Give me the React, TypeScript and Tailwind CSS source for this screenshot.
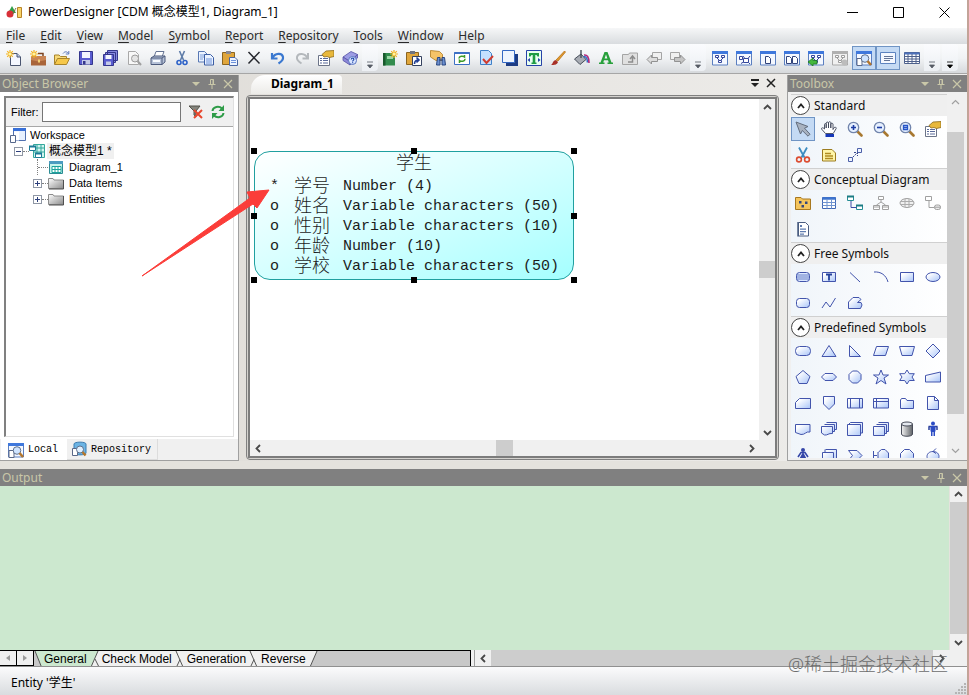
import type { ReactNode } from "react"
import clsx from "clsx"

const UI = "font-['Noto_Sans','Noto_Sans_CJK_SC',sans-serif]"
const CLASSIC = "font-['Liberation_Sans','Noto_Sans_CJK_SC',sans-serif]"
const MONO = "font-['Liberation_Mono','Noto_Sans_CJK_SC',monospace]"

const MENUS = ["File", "Edit", "View", "Model", "Symbol", "Report", "Repository", "Tools", "Window", "Help"]

const windowFrame = (
  <>
    <path d="M.5 1.5h15v13.500H.5z" fill="#f4f8ff" stroke="#5b7fc0" />
    <path d="M0 1h16v3H0z" fill="#3f78dc" />
  </>
)

const docGlyph = (x: number) => (
  <path d={`M${x} 6.5h3l2 2v5h-5z`} fill="#fff" stroke="#33457c" />
)

const sparkle = (x: number, y: number) => (
  <g transform={`translate(${x} ${y})`} stroke="#f4b424" strokeWidth="1.2">
    <path d="M0-4v8M-4 0h8M-2.8-2.8l5.600 5.600M2.8-2.8l-5.600 5.600" />
    <circle r="1.5" fill="#fff3a0" stroke="none" />
  </g>
)

const propertySheet = (
  <>
    <path d="M.5 5.500h11v10H.5z" fill="#fff" stroke="#6c7488" />
    <path d="M2 8.500h2M5 8.500h5M2 10.500h2M5 10.500h5M2 13h2M5 13h5" stroke="#5a6a9a" />
    <path d="M4 4.500 8 1l8-.5v6l-4.500 1-2.500-1-3 .5z" fill="#e8b83c" stroke="#8c6a1c" strokeWidth=".8" />
  </>
)

const lens = (inner: ReactNode) => (
  <>
    <path d="m10 10 4.500 4.500" stroke="#a87830" strokeWidth="2.600" strokeLinecap="round" />
    <circle cx="6.500" cy="6.500" r="5.200" fill="#e6f0ff" stroke="#7285ac" strokeWidth="1.300" />
    {inner}
  </>
)

const graphGlyph = (color: string) => (
  <path d="M3.5 5.5h3v2h-3zM9.500 5.500h3v2h-3zM6.500 10.500h3v2h-3zM5 8l2.500 2.500M11 8l-2.500 2.500" fill="#fff" stroke={color} />
)

const tools: Record<string, ReactNode> = {
  New: (
    <>
      <path d="M4.500 3.500h6.500l3.500 3.500v8.500h-10z" fill="#f4f7ff" stroke="#4a5570" />
      <path d="M11 3.500v3.500h3.500" fill="#b8c8e8" stroke="#4a5570" />
      {sparkle(4, 4)}
    </>
  ),
  "New Project": (
    <>
      <path d="M1 6h15v9.500H1z" fill="#a9653a" />
      <path d="M1 6h15v4l-7.500 1.500L1 10z" fill="#c98556" />
      <path d="M8 3.500h5V6" fill="none" stroke="#7c4422" strokeWidth="1.500" />
      <path d="M8 9.500h2v3H8z" fill="#f3d074" />
      {sparkle(4, 4)}
    </>
  ),
  Open: (
    <>
      <path d="M.5 14V5h4.500l1.500 1.500h6V9" fill="#f7d978" stroke="#a8842c" />
      <path d="m.5 14.500 3-6H15.500l-3 6z" fill="#f6c84a" stroke="#a8842c" />
      <path d="M9 3.500c2-2.500 4-2 5.500 0M14.800 1v3h-3" fill="none" stroke="#5a76b8" />
    </>
  ),
  Save: (
    <>
      <path d="M1.500 1.500h13v13h-13z" fill="#5a5cd0" stroke="#34368c" />
      <path d="M4 2h8v6H4z" fill="#f4f6ff" />
      <path d="M4 10h8v4.500H4z" fill="#c4cae8" />
      <path d="M5 11h2.500v3.500H5z" fill="#34368c" />
    </>
  ),
  "Save All": (
    <>
      <path d="M5.500.500h10v10h-10zM3.500 2.500h10v10h-10z" fill="#8688e0" stroke="#34368c" />
      <path d="M1.500 4.500h10v11h-10z" fill="#5a5cd0" stroke="#34368c" />
      <path d="M3.500 5h6v4h-6z" fill="#f4f6ff" />
      <path d="M4 11.500h5V15H4z" fill="#c4cae8" />
    </>
  ),
  "Print Preview": (
    <>
      <path d="M2.500 1.500h7l3 3v10h-10z" fill="#f8f8f8" stroke="#a8a8a8" />
      <circle cx="9" cy="8.500" r="3.500" fill="#e4e4e4" stroke="#9c9c9c" />
      <path d="m11.500 11 3.500 4" stroke="#a0a0a0" strokeWidth="2" />
    </>
  ),
  Print: (
    <>
      <path d="M6 1.500h8L12 7H4z" fill="#fff" stroke="#657494" />
      <path d="m1 8 3-2h11v6l-3 2.500H1z" fill="#b6c2d8" stroke="#4c5a7c" />
      <path d="M1 8h11v6.500M12 8l3-2" fill="none" stroke="#4c5a7c" />
      <path d="M3 11h7" stroke="#f8fbff" strokeWidth="2" />
    </>
  ),
  Cut: (
    <>
      <path d="m5.500 1 4 9M10.500 1l-4 9" stroke="#5e7ca8" strokeWidth="1.600" />
      <circle cx="5" cy="12.500" r="2" fill="none" stroke="#2d62c8" strokeWidth="1.600" />
      <circle cx="11" cy="12.500" r="2" fill="none" stroke="#2d62c8" strokeWidth="1.600" />
    </>
  ),
  Copy: (
    <>
      <path d="M.5 1.500h6l2.500 2.500v8H.5z" fill="#eaf2ff" stroke="#5878b4" />
      <path d="M2 5h5M2 7h5M2 9h3" stroke="#7ea0dc" />
      <path d="M6.500 4.500h6l3 3v7.500h-9z" fill="#eaf2ff" stroke="#3c5ea4" />
      <path d="M8 9h6M8 11h6M8 13h6" stroke="#6c92dc" />
    </>
  ),
  Paste: (
    <>
      <path d="M.5 2.500h12v12H.5z" fill="#e0a63c" stroke="#8a6420" />
      <path d="M4 1h5v3H4z" fill="#8a8a94" />
      <path d="M7.500 7.500h5.500l2.500 2.500v5.500h-8z" fill="#eef4ff" stroke="#4a66a4" />
      <path d="M9 10.500h5M9 12.500h5" stroke="#6c92dc" />
    </>
  ),
  Delete: <path d="m2.500 2 11 11.500M13.500 2 2.500 13.500" stroke="#26282e" strokeWidth="1.500" />,
  Undo: <path d="M2 3v5.500h5.500M2.500 8C5 3 12 2.500 13 7c.5 3-2 5-4.500 6.500" fill="none" stroke="#3a78d0" strokeWidth="2.200" />,
  Redo: <path d="M14 3v5.500H8.500M13.500 8C11 3 4 2.500 3 7c-.5 3 2 5 4.500 6.500" fill="none" stroke="#b4b8bc" strokeWidth="2" />,
  Properties: propertySheet,
  "Help Topics": (
    <>
      <path d="m1 7 8-5.500 6.500 3-7.500 7z" fill="#9c9ce4" stroke="#5450a4" strokeWidth=".8" />
      <path d="M1 7v3.500l7 4.500v-3.500zM8 11.500V15l7.500-7V4.500z" fill="#8c88d8" stroke="#5450a4" strokeWidth=".8" />
      <circle cx="10.500" cy="10.500" r="4" fill="#d8e4ff" stroke="#5a76c0" />
      <path d="M9.300 9.500c0-2 2.700-1.700 2.500 0-.1 1-1.200.8-1.200 2M10.600 12.300v1" fill="none" stroke="#234aa8" strokeWidth="1.200" />
    </>
  ),
}

const viewTools: Record<string, ReactNode> = {
  "New Diagram": (
    <>
      <path d="M1 3h12v12.500H1z" fill="#338c4e" />
      <path d="M1 3h2.500v12.500H1z" fill="#19592c" />
      <path d="M5 6h6v3H5z" fill="#9ad8a4" />
      {sparkle(12, 4)}
    </>
  ),
  "Paste as Shortcut": (
    <>
      <path d="M.5 2.500h12v12H.5z" fill="#e0a63c" stroke="#8a6420" />
      <path d="M4 1h5v3H4z" fill="#707480" />
      <path d="M6.500 6.500h9v9h-9z" fill="#fff" stroke="#34415f" />
      <path d="M8.500 14c0-3 1-4 4-4M10.500 7.500l2.500 2.500-2.500 2.500" fill="none" stroke="#1f3d94" strokeWidth="1.600" />
    </>
  ),
  "Find Objects": (
    <>
      <path d="m.5.5 9 1 3 3v6H6L.5 7z" fill="#f6c468" stroke="#b07a1c" strokeWidth=".8" />
      <path d="M7.500 7.500H10v7.500H6.500zM12 7.500h2.500l1 7.500H12zM9 10h4" fill="#6c90d0" stroke="#294680" />
    </>
  ),
  Refresh: (
    <>
      <path d="M.5 2.500h15v12H.5z" fill="#fff" stroke="#3c70c4" />
      <path d="M.5 2h15v2H.5z" fill="#3c70c4" />
      <path d="M5 8.500C5 6 9 5.500 10.500 7V5M11 9c0 2.500-4 3-5.500 1.500V13" fill="none" stroke="#3e9c28" strokeWidth="1.500" />
    </>
  ),
  "Check Model": (
    <>
      <path d="M2.500.5h8l3 3v11h-11z" fill="#c4e0ff" stroke="#3f80c8" />
      <path d="m5 9 3.500 4L15 6" fill="none" stroke="#d03c30" strokeWidth="2" />
    </>
  ),
  Shadow: (
    <>
      <path d="M4 4h12v12H4z" fill="#1d3c84" />
      <path d="M.5.5h12v12H.5z" fill="#eef5ff" stroke="#3468c4" />
    </>
  ),
  "Text Size": (
    <>
      <path d="M.5.5h15v15H.5z" fill="#e8fff0" stroke="#2642a8" />
      <path d="M3 3h10v3.500h-1.500L10.500 5H9.300v7.500h1.200V14h-5v-1.500h1.200V5H5.500l-1 1.500H3z" fill="#1f9c44" />
      <path d="m1.500 10 2.500-2v4zM14.500 10 12 8v4z" fill="#2642a8" />
    </>
  ),
  "Line Style": (
    <>
      <path d="m6 10 8.500-9 1 1L8 11z" fill="#e09a2c" stroke="#b8721c" strokeWidth=".8" />
      <path d="M1 15c2-1 1.500-4 4.500-5L8 12c-1 3-4 3-7 3z" fill="#a83028" />
    </>
  ),
  Fill: (
    <>
      <path d="m.5 9 6.500-5 5 5.500-6 5z" fill="#a8acb4" stroke="#444c58" />
      <path d="M7 8V0" stroke="#444c58" strokeWidth="1.400" />
      <path d="M10 5c3-.5 5 2 5 8" fill="none" stroke="#b0287c" strokeWidth="1.600" />
      <path d="M9.500 6.500c3 0 4 2 3.800 6" fill="none" stroke="#2d68c8" strokeWidth="1.400" />
    </>
  ),
  "Font Color": <path d="M6.500 2h3l4 10.500H15V14h-5.500v-1.500h1.300L10 10.300H6l-.8 2.200h1.300V14H1v-1.500h1.500zM8 4.500 6.600 8.600h2.800z" fill="#28a03c" />,
  "Parent Diagram": (
    <>
      <path d="M.5 4.500h6l1-1.500h8v11.500H.5z" fill="#e0e0e0" stroke="#a4a4a4" />
      <path d="M6 12h4.500V7M8 9l2.500-3L13 9" fill="none" stroke="#8c8c8c" strokeWidth="1.500" />
    </>
  ),
  Previous: (
    <>
      <path d="M6.500 2.500h9v7h-9z" fill="#f0f0f0" stroke="#a4a4a4" />
      <path d="m1 9.500 4.500-4.500v2.500h6v4h-6V14z" fill="#dcdcdc" stroke="#929292" />
    </>
  ),
  Next: (
    <>
      <path d="M.5 2.500h9v7h-9z" fill="#f0f0f0" stroke="#a4a4a4" />
      <path d="m15 9.500-4.500-4.500v2.500h-6v4h6V14z" fill="#c4c4c4" stroke="#929292" />
    </>
  ),
}

const windowTools: Record<string, ReactNode> = {
  Conceptual: <>{windowFrame}{graphGlyph("#34479c")}</>,
  Process: (
    <>
      {windowFrame}
      <path d="M3.500 6.500h3v3h-3zM7.500 8.500h5v4h-5zM7 6l1.500 2M14 6l-2 2.500M5 13.500l2.500-1.500M14 14l-1.500-1.500" fill="#fff" stroke="#34479c" />
    </>
  ),
  Report: <>{windowFrame}{docGlyph(5.5)}</>,
  "Multi-Model Report": <>{windowFrame}{docGlyph(2.5)}{docGlyph(8.5)}</>,
  "Generate Model": (
    <>
      {windowFrame}
      {graphGlyph("#34479c")}
      <path d="m0 12 5-4v2.500h4V14H5v2z" fill="#44b83c" stroke="#1c7824" strokeWidth=".8" />
    </>
  ),
  "Update Model": (
    <>
      <path d="M.5 1.500h15v13.500H.5z" fill="#f0f0f0" stroke="#a8a8a8" />
      <path d="M0 1h16v3H0z" fill="#b0b0b0" />
      {graphGlyph("#9c9c9c")}
      <circle cx="12.500" cy="12.500" r="3" fill="#bcbcbc" />
    </>
  ),
  "Browser Window": (
    <>
      {windowFrame}
      <path d="M1 8.500h5v7H1z" fill="#fff" stroke="#5a6888" />
      <circle cx="9" cy="8.500" r="3.800" fill="#cfe4ff" stroke="#60708c" />
      <path d="m11.500 11 3.500 4" stroke="#b4762c" strokeWidth="2.500" />
    </>
  ),
  "Output Window": (
    <>
      <path d="M.5 2.500h15v11h-15z" fill="#f4f8ff" stroke="#5c83c0" />
      <path d="M4 6.500h9M4 8.500h9M4 10.500h6" stroke="#637598" />
    </>
  ),
  "Result List": (
    <>
      <path d="M.5 2.500h15v11h-15z" fill="#fff" stroke="#4e618c" />
      <path d="M.5 3.500h15" stroke="#4e72bc" strokeWidth="2" />
      <path d="M.5 6.500h15M.5 9h15M.5 11.500h15M4 4v9.500M8 4v9.500M12 4v9.500" stroke="#4e618c" />
    </>
  ),
}

const standardTools: Record<string, ReactNode> = {
  Pointer: <path d="m1 1 12 4.500-3.500 1.700 5.500 6-2 2-5.700-5.700-1.800 3.500z" fill="#a8b2c0" stroke="#626c7c" />,
  Grabber: (
    <>
      <path d="M4.500 12.500.5 8c-.3-1.500 1.700-1.600 3 0V3.500c.2-1.300 1.500-1.300 1.700 0V7 2c.3-1.300 2-1.300 2.300 0v5-5.500c.3-1 2.100-1 2.300 0V7 3c.3-1 2-1 2.200 0v5.500l1.200-2c1-.8 2.400 0 2 1l-3 5z" fill="#fff" stroke="#3c4458" strokeWidth=".9" />
      <path d="M4.500 13H13v3H4.500z" fill="#1638b8" />
    </>
  ),
  "Zoom In": lens(<path d="M4 6.500h5M6.500 4v5" stroke="#1c3ca4" strokeWidth="1.600" />),
  "Zoom Out": lens(<path d="M4 6.500h5" stroke="#1c3ca4" strokeWidth="1.600" />),
  "Open Diagram": lens(<path d="M4.500 4.500h4v4h-4zM4.500 6.500h4" fill="#fff" stroke="#2554c8" strokeWidth="1.300" />),
  Properties: propertySheet,
  Delete: (
    <>
      <path d="m4 .5 5.500 10M12 .5l-5.500 10" stroke="#3d8cc0" strokeWidth="1.800" />
      <circle cx="4" cy="12.500" r="2.400" fill="none" stroke="#dc4c30" strokeWidth="1.600" />
      <circle cx="12" cy="12.500" r="2.400" fill="none" stroke="#dc4c30" strokeWidth="1.600" />
    </>
  ),
  Note: (
    <>
      <path d="M1.500 2.500h9.500l3.500 3.500v8h-13z" fill="#fff6a8" stroke="#9c7c20" />
      <path d="M4 6.500h6M4 9h8M4 11.500h8" stroke="#b08c20" strokeWidth="1.300" />
    </>
  ),
  Link: (
    <>
      <path d="M1.500 10.500h4v4h-4zM10.500 1.500h4v4h-4z" fill="#eef4ff" stroke="#4c60a8" />
      <path d="m6 10 4-4M7 5.500h3.500V9" fill="none" stroke="#37488c" strokeDasharray="2 1" />
    </>
  ),
}

const conceptualTools: Record<string, ReactNode> = {
  Package: (
    <>
      <path d="M.5 2.500H6L7.500 4h8v10.500H.5z" fill="#f4c45c" stroke="#a87820" />
      <path d="M4 6h2.500v2.500H4zM10 6.500h2.500V9H10zM6.500 10H9v2.500H6.500z" fill="#34477c" />
    </>
  ),
  Entity: (
    <>
      <path d="M1.500 2.500h13v11h-13z" fill="#fff" stroke="#4268b4" />
      <path d="M1.500 3.500h13" stroke="#3c74d0" strokeWidth="2.500" />
      <path d="M1.500 7.500h13M1.500 10.500h13M6 4v9.500M10.500 4v9.500" stroke="#7094d0" />
    </>
  ),
  Relationship: (
    <>
      <path d="M.5 1.500h6v4h-6zM9.500 10.500h6v4h-6z" fill="#fff" stroke="#258c94" />
      <path d="M0 1.500h7M9 10.500h7" stroke="#1c7c84" strokeWidth="2" />
      <path d="M4 6v6.500h5.500" fill="none" stroke="#3c4ca4" />
    </>
  ),
  Inheritance: <path d="M5.500 1.500h5v3h-5zM.5 10.500h6v4h-6zM9.500 10.500h6v4h-6zM8 5v2L3.500 10M8 7l4.500 3M.5 12h6M9.500 12h6" fill="#fff" stroke="#a0a0a0" />,
  Association: (
    <>
      <ellipse cx="8" cy="8" rx="7" ry="4.500" fill="#f0f0f0" stroke="#a0a0a0" />
      <path d="M1.500 6.500h13M1.500 9.500h13M6 4v8M10 4v8" stroke="#acacac" />
    </>
  ),
  "Association Link": (
    <>
      <path d="M.5 1.500h6v4h-6zM4 6v6.500h5" fill="#fff" stroke="#a0a0a0" />
      <rect x="9.500" y="10" width="6" height="4.500" rx="2" fill="#ececec" stroke="#a0a0a0" />
      <path d="M9.500 12.200h6" stroke="#a0a0a0" />
    </>
  ),
  File: (
    <>
      <path d="M3.500 1.500h7l3 3v10.500h-10z" fill="#fff" stroke="#4a5c80" />
      <path d="M5 4h2v2H5zM5 7.500h6v1.200H5zM5 10h6v1.200H5zM5 12.500h4v1.200H5z" fill="#5f7cb0" />
      <path d="M3 1v14.500" stroke="#4a5c80" strokeWidth="1.500" />
    </>
  ),
}

const shape = (d: string, fill = "url(#shapeFill)") => <path d={d} fill={fill} stroke="#4254ac" />

const freeTools: Record<string, ReactNode> = {
  Title: (
    <>
      <rect x="1.500" y="3.500" width="13" height="9" rx="3" fill="#dce8ff" stroke="#4254ac" />
      <path d="M1.500 6h13M1.500 8h13M1.500 10h13" stroke="#4a64b8" strokeWidth=".8" />
    </>
  ),
  Text: (
    <>
      {shape("M1.5 3.500h13v9h-13z")}
      <path d="M5 5.500h6M8 5.500v6" stroke="#23409c" strokeWidth="1.800" />
    </>
  ),
  Line: shape("m3 3.500 10 9.500", "none"),
  Arc: shape("M1 3C8 2.500 13 6 15 13", "none"),
  Rectangle: shape("M1.500 3.500h13v9h-13z"),
  Ellipse: <ellipse cx="8" cy="8" rx="7" ry="4.500" fill="url(#shapeFill)" stroke="#4254ac" />,
  "Rounded Rectangle": <rect x="1.500" y="3.500" width="13" height="9" rx="3" fill="url(#shapeFill)" stroke="#4254ac" />,
  Polyline: shape("m1 13 4-6 4 5 5.500-9", "none"),
  Polygon: shape("M1.500 13.500V7l4.500-4.500h6l2 2-3.500 3h3.500l1 2.500-1.500 3.500z"),
}

const predefinedTools: Record<string, ReactNode> = {
  Terminator: <rect x="0.500" y="3.500" width="15" height="9" rx="4" fill="url(#shapeFill)" stroke="#4254ac" />,
  Triangle: shape("M8 2.500l7 11H1z"),
  "Right Triangle": shape("M2.500 2.500v11h11z"),
  Parallelogram: shape("M3.500 3.500h12l-3 9h-12z"),
  Trapezoid: shape("M.5 3.500h15l-2.500 9H3z"),
  Diamond: shape("M8 1 15 8l-7 7-7-7z"),
  Pentagon: shape("M8 1.500 15 7.500l-3 7H4l-3-7z"),
  Hexagon: shape("M4 4.500h8l3.500 3.500-3.500 3.500H4L.5 8z"),
  Octagon: shape("M5.500 2h5L14 5.500v5L10.500 14h-5L2 10.500v-5z"),
  Star: shape("m8 1 2 5h5.500L11 9l2 6-5-3.500L3 15l2-6L.5 6H6z"),
  "Six-Point Star": shape("m8 1 2.300 3.700h5L13 8l2.300 3.500h-5L8 15l-2.300-3.500h-5L3 8 .700 4.700h5z"),
  "Manual Input": shape("M.5 6.500l15-3.500v10h-15z"),
  Card: shape("M.5 7.500l4-4h11v10H.5z"),
  "Off-Page": shape("M2.500 1.500h11V9L8 14.500 2.500 9z"),
  Process: shape("M.5 3.500h15v9.500H.5zM3.500 3.500v9.500M12.500 3.500v9.500"),
  Storage: shape("M.5 3.500h15v9.500H.5zM.5 6.500h15M3.500 3.500v9.500"),
  Folder: shape("M1.500 13.500V5l1-1.500h4L8 5.500h6.500v8z"),
  Document: shape("M2.500 1.500h7l4 4v9h-11zM9.500 1.500v4h4"),
  Wave: shape("M.5 3.500h14.500v7.500c-4-1-5 3-9 2.500l-5.500-2z"),
  "Multi Wave": shape("M5.500 1.500h10v7h-2M3.500 3.500h10v7h-2M.5 5.500h11v7c-4-.5-5 2-8 1.500l-3-2z"),
  "Stacked Box": shape("M3.500 1.500h12v10.500h-2M.5 4.500 3.500 1.500M.5 3.500h13v11H.5z"),
  "Stacked Cards": shape("M5.500 1.500h10v9h-2M3.500 3.500h10v9h-2M.5 5.500h11v9H.5z"),
  Cylinder: (
    <>
      <path d="M2.500 3v10c0 3 11 3 11 0V3z" fill="url(#metal)" stroke="#484c58" />
      <ellipse cx="8" cy="3" rx="5.500" ry="2" fill="#e4e8ee" stroke="#484c58" />
    </>
  ),
  Actor: (
    <>
      <circle cx="8" cy="2.500" r="2" fill="#2c4cc4" />
      <path d="M3.500 5.500h9M4 5.500V9M12 5.500V9" stroke="#2a3f9c" strokeWidth="1.500" />
      <path d="M5.500 5h5v5.500H10V15H8.500v-4h-1v4H6v-4.500h-.5z" fill="#2c4cc4" />
    </>
  ),
  Woman: (
    <>
      <circle cx="8" cy="3" r="2" fill="#3546a8" />
      <path d="M3 10 6 5.500h4l3 4.500" fill="none" stroke="#3546a8" strokeWidth="1.600" />
      <path d="m8 5 4 7.500H9.500V16H6.500v-3.500H4z" fill="#3546a8" />
    </>
  ),
  Component: shape("M4.500 2.500h11v9h-3M1.500 5.500h11v10h-11zM4 5V2.500"),
  Chevron: shape("M1.500 3.500H10l5 5-5 5H1.500l4-5z"),
  Boundary: shape("M.5 4v9M.5 8.500H4M5.500 5l3-2.500h3.500l3.500 3.500v5L12 14H8.500L5 11V5"),
  "Entity Object": shape("M5.500 2.500h5l4 4v4l-4 4h-5l-4-4v-4z"),
  Control: shape("M8 4.500c8 0 8 10 0 10s-8-10 0-10l3-3M8 4.500l3 2"),
}

const SECTIONS = [
  { title: "Standard", items: standardTools },
  { title: "Conceptual Diagram", items: conceptualTools },
  { title: "Free Symbols", items: freeTools },
  { title: "Predefined Symbols", items: predefinedTools },
]

const ATTRIBUTES = [
  { mark: "*", name: "学号", type: "Number (4)" },
  { mark: "o", name: "姓名", type: "Variable characters (50)" },
  { mark: "o", name: "性别", type: "Variable characters (10)" },
  { mark: "o", name: "年龄", type: "Number (10)" },
  { mark: "o", name: "学校", type: "Variable characters (50)" },
]

const HANDLES = [
  "-left-1 -top-1",
  "left-1/2 -ml-[3px] -top-1",
  "-right-1 -top-1",
  "-left-1 top-1/2 -mt-[3px]",
  "-right-1 top-1/2 -mt-[3px]",
  "-left-1 -bottom-1",
  "left-1/2 -ml-[3px] -bottom-1",
  "-right-1 -bottom-1",
]

function Glyph({ children, className }: { children: ReactNode; className?: string }) {
  return (
    <svg viewBox="0 0 16 16" fill="none" aria-hidden className={clsx("size-4 shrink-0", className)}>
      {children}
    </svg>
  )
}

function ToolGroup({ items, active = [] }: { items: Record<string, ReactNode>; active?: string[] }) {
  return (
    <div className="flex items-center">
      {Object.entries(items).map(([name, icon]) => (
        <button
          key={name}
          aria-label={name}
          className={clsx(
            "flex size-6 items-center justify-center border",
            active.includes(name) ? "border-[#6f94c4] bg-[#c4daf4]" : "border-transparent",
          )}
        >
          <Glyph>{icon}</Glyph>
        </button>
      ))}
    </div>
  )
}

function Overflow({ dark }: { dark?: boolean }) {
  return (
    <button
      aria-label="Toolbar options"
      className="flex h-[27px] w-4 items-end justify-center rounded-r bg-gradient-to-b from-[#fbfcfe] to-[#eceff3] pb-[2px]"
    >
      <svg viewBox="0 0 8 8" aria-hidden className={clsx("size-2", dark ? "text-black" : "text-[#555b64]")}>
        <path d="M1 1h6M1.500 4h5L4 7z" stroke="currentColor" fill="currentColor" strokeWidth=".8" />
      </svg>
    </button>
  )
}

function PanelHeader({ title }: { title: string }) {
  return (
    <header className="flex h-[17px] shrink-0 items-center bg-[#808080] px-[2px] text-[#c9c7a8]">
      <h2 className="flex-1 text-[12px] leading-4">{title}</h2>
      <button aria-label={`${title} menu`} className="flex size-4 items-center justify-center">
        <svg viewBox="0 0 8 4" aria-hidden className="h-1 w-2"><path d="M0 0h8L4 4z" fill="currentColor" /></svg>
      </button>
      <button aria-label={`Pin ${title}`} className="flex size-4 items-center justify-center">
        <svg viewBox="0 0 8 10" fill="none" stroke="currentColor" aria-hidden className="h-[10px] w-2">
          <path d="M2.500.5h3v5h-3zM5 .5v5M.5 5.500h7M4 6v4" />
        </svg>
      </button>
      <button aria-label={`Close ${title}`} className="flex size-4 items-center justify-center">
        <svg viewBox="0 0 10 10" fill="none" stroke="currentColor" aria-hidden className="size-[10px]">
          <path d="m1 1 8 8M9 1 1 9" strokeWidth="1.200" />
        </svg>
      </button>
    </header>
  )
}

function Arrow({ dir, faint }: { dir: "up" | "down" | "left" | "right"; faint?: boolean }) {
  const d = { up: "M1 6l3.500-3.500L8 6", down: "M1 3l3.500 3.500L8 3", left: "M6 1 2.500 4.500 6 8", right: "M3 1l3.500 3.500L3 8" }[dir]
  return (
    <button aria-label={`Scroll ${dir}`} className="flex size-4 shrink-0 items-center justify-center">
      <svg viewBox="0 0 9 9" fill="none" aria-hidden className={clsx("size-[9px]", faint ? "text-[#a0a0a0]" : "text-[#484848]")}>
        <path d={d} stroke="currentColor" strokeWidth={faint ? 1.2 : 1.8} />
      </svg>
    </button>
  )
}

function TitleBar() {
  return (
    <header className="flex h-7 shrink-0 items-center bg-white pb-1 pl-[6px]">
      <Glyph>
        <path d="M6 2 10 9H2z" fill="#2f9e48" />
        <circle cx="4" cy="10" r="3.500" fill="#d83038" />
        <path d="M6 10c3 0 2-4 4-6" stroke="#7c6a3c" />
        <path d="M11.500 3.500h4v10h-4z" fill="#f8d468" stroke="#b88428" />
      </Glyph>
      <h1 className="ml-[6px] flex-1 text-[12px] text-black">PowerDesigner [CDM 概念模型1, Diagram_1]</h1>
      <div className="flex text-black">
        {[
          { name: "Minimize", d: "M0 5.500h11" },
          { name: "Maximize", d: "M.5.5h10v10H.5z" },
          { name: "Close", d: "m.5.5 10 10M10.500.5l-10 10" },
        ].map((b) => (
          <button key={b.name} aria-label={b.name} className="flex h-6 w-[46px] items-center justify-center">
            <svg viewBox="0 0 11 11" fill="none" stroke="currentColor" aria-hidden className="size-[11px]">
              <path d={b.d} />
            </svg>
          </button>
        ))}
      </div>
    </header>
  )
}

function MenuBar() {
  return (
    <nav className="flex h-4 shrink-0 items-center gap-[15px] bg-gradient-to-b from-[#f6f7f8] to-[#d9dcdf] pl-[6px] text-[12px] leading-4 text-[#2b2b2b]">
      {MENUS.map((m) => (
        <button key={m}>
          <span className="underline underline-offset-2">{m[0]}</span>
          {m.slice(1)}
        </button>
      ))}
    </nav>
  )
}

function Toolbar() {
  return (
    <div className="flex h-[29px] shrink-0 items-center bg-gradient-to-b from-[#fafbfc] via-[#f0f2f4] to-[#d6d9dc] pb-[2px] pl-[2px]">
      <ToolGroup items={tools} />
      <Overflow />
      <ToolGroup items={viewTools} />
      <Overflow />
      <div className="w-[2px]" />
      <ToolGroup items={windowTools} active={["Browser Window", "Output Window"]} />
      <Overflow />
      <div className="w-[2px]" />
      <Overflow dark />
    </div>
  )
}

const folder = (
  <>
    <path d="M.5 13.500v-10h4.500l1 1.500h9.500v8.500z" fill="url(#folderFill)" stroke="#8c8c8c" />
    <path d="M15.500 5v9H1" stroke="#505050" />
  </>
)

function Expander({ open }: { open?: boolean }) {
  return (
    <button
      aria-label={open ? "Collapse" : "Expand"}
      className="flex size-[9px] shrink-0 items-center justify-center border border-[#8f97a5] bg-white"
    >
      <svg viewBox="0 0 5 5" aria-hidden className="size-[5px]" stroke="#2c3f7c">
        <path d={open ? "M0 2.500h5" : "M0 2.500h5M2.500 0v5"} />
      </svg>
    </button>
  )
}

function ObjectBrowser() {
  return (
    <section className="flex w-[239px] shrink-0 flex-col border-r border-b border-[#a0a0a0] bg-[#f0f0f0]">
      <PanelHeader title="Object Browser" />
      <div className="flex flex-1 flex-col border-4 border-b-2 border-white">
        <div className={clsx("flex flex-1 flex-col border-t-2 border-l-2 border-[#808080] border-r border-b border-r-[#e0e0e0] border-b-[#e0e0e0] bg-white text-[11px] text-black", CLASSIC)}>
          <div className="flex h-[29px] items-center border-b border-[#a8a8a8] bg-[#f0f0f0] pl-[5px]">
            <label htmlFor="filter" className="w-[31px]">Filter:</label>
            <input id="filter" className="h-5 w-[139px] border border-[#767676] bg-white px-1 outline-none" />
            <button aria-label="Clear filter" className="ml-1.5 flex size-[18px] items-center justify-center">
              <Glyph>
                <path d="M1 2h11L8 7v5.500l-2-1.500V7z" fill="#84847c" stroke="#505048" />
                <path d="m6 6 8 8M14 6l-8 8" stroke="#e8462c" strokeWidth="2" />
              </Glyph>
            </button>
            <button aria-label="Refresh" className="ml-1 flex size-[18px] items-center justify-center">
              <Glyph>
                <path d="M2.500 7C3 2.500 9 1.500 12 4.500M13.500 9C13 13.500 7 14.500 4 11.500" stroke="#2f9c48" strokeWidth="2" />
                <path d="M14 1v6H8.500zM2 15V9h5.500z" fill="#2f9c48" />
              </Glyph>
            </button>
          </div>
          <ul className="leading-4">
            <li className="flex h-4 items-center gap-1 pl-[4px]">
              <Glyph>
                <path d="M3.500 1.500h12v12h-12z" fill="#e6f0ff" stroke="#5070b0" />
                <path d="M3 1h13v3H3z" fill="#3870d8" />
                <path d="M4 4.500h5v9H4z" fill="#fff" />
                <path d="M.5 8.500h5v7h-5z" fill="#fff" stroke="#56688c" />
              </Glyph>
              Workspace
            </li>
            <li className="flex h-4 items-center pl-2">
              <Expander open />
              <span className="w-[6px] border-t border-dotted border-[#808080]" />
              <Glyph>
                <path d="M4.500 1.500h11v13h-11zM8 1.500v13M12 1.500v13M4.500 5h11M4.500 9h11" fill="#d0f4f0" stroke="#34a89c" />
                <path d="M.5 3.500h6v4h-6zM6.500 10.500h6v4h-6z" fill="#fff" stroke="#1c7c98" />
                <path d="M0 3.500h7M6 10.500h7" stroke="#1c7c98" strokeWidth="2" />
              </Glyph>
              <span className="ml-[2px] bg-[#f0f0f0] px-[2px] text-[12px]">概念模型1 *</span>
            </li>
            <li className="ml-[31px] flex h-4 items-center border-l border-dotted border-[#808080]">
              <span className="w-[10px] border-t border-dotted border-[#808080]" />
              <Glyph>
                <path d="M1.500 2.500h13v12h-13z" fill="#c8f4ec" stroke="#2c8c94" />
                <path d="M1 2h14v3H1z" fill="#4c9cc0" />
                <path d="M4 7.500h9v6H4zM7 7.500v6M10 7.500v6M4 10.500h9" fill="#fff" stroke="#1ca49c" />
              </Glyph>
              <span className="ml-[5px]">Diagram_1</span>
            </li>
            {["Data Items", "Entities"].map((label) => (
              <li key={label} className="flex h-4 items-center pl-[27px]">
                <Expander />
                <span className="w-[6px] border-t border-dotted border-[#808080]" />
                <Glyph>{folder}</Glyph>
                <span className="ml-[5px]">{label}</span>
              </li>
            ))}
          </ul>
        </div>
      </div>
      <div className={clsx("flex h-[21px] items-stretch pl-px text-[10px] text-black", MONO)}>
        {["Local", "Repository"].map((label, i) => (
          <button
            key={label}
            className={clsx("flex items-center gap-1", i === 0 ? "w-[66px] bg-white pl-[7px]" : "w-[91px] border-r border-b border-[#dcdcdc] pl-1")}
          >
            <Glyph>{i === 0 ? windowTools["Browser Window"] : (
              <>
                <path d="M3 3c0-2.500 12-2.500 12 0v9c0 2.500-12 2.500-12 0z" fill="#6cb4e4" stroke="#3c7cb0" />
                <path d="M1.500 7.500h5v7h-5z" fill="#fff" stroke="#5a6888" />
                <circle cx="9" cy="8.500" r="3.500" fill="#e0f0ff" stroke="#60708c" />
                <path d="m11.500 11 3 3.500" stroke="#b4762c" strokeWidth="2.500" />
              </>
            )}</Glyph>
            {label}
          </button>
        ))}
      </div>
    </section>
  )
}

function Entity() {
  return (
    <article
      className={clsx(
        "absolute top-[52px] left-1 h-[129px] w-[320px] rounded-[16px] border border-[#20a0a0] bg-gradient-to-br from-white to-[#a4ffff] text-[15px] text-[#1c1c1c]",
        MONO,
      )}
    >
      <h3 className="text-center text-[18px] leading-[25px] font-light">学生</h3>
      <ul>
        {ATTRIBUTES.map((a) => (
          <li key={a.name} className="flex h-5 items-center pl-[15px] leading-5">
            <span className="w-6">{a.mark}</span>
            <span className="w-[49px] text-[18px] font-light">{a.name}</span>
            <span className="whitespace-pre">{a.type}</span>
          </li>
        ))}
      </ul>
      {HANDLES.map((pos) => (
        <span key={pos} className={clsx("absolute size-[6px] bg-black", pos)} />
      ))}
    </article>
  )
}

function DiagramArea() {
  return (
    <section className="flex min-w-0 flex-1 flex-col px-[5px] pb-px">
      <div className="flex h-5">
        <button className="ml-[5px] flex h-[19px] items-center rounded-tl-[14px] rounded-tr-sm bg-gradient-to-b from-white to-[#ecebe8] pr-2 pb-[2px] pl-5 text-[12px] leading-4 font-bold text-black">
          Diagram_1
        </button>
        <div className="flex-1" />
        <button aria-label="Window list" className="flex size-4 items-center justify-center">
          <svg viewBox="0 0 10 8" aria-hidden className="h-2 w-[10px]"><path d="M1 0h8v2H1zM1 4h8L5 8z" fill="#222" /></svg>
        </button>
        <button aria-label="Close diagram" className="flex size-4 items-center justify-center">
          <svg viewBox="0 0 10 10" aria-hidden className="size-[10px]" stroke="#222" strokeWidth="1.500"><path d="m1 1 8 8M9 1 1 9" /></svg>
        </button>
      </div>
      <div className="flex flex-1 rounded-[4px] border border-[#808080] bg-[#d4d2ce] p-px">
        <div className="grid flex-1 grid-cols-[1fr_16px] grid-rows-[1fr_16px] border-2 border-[#7c7c7c] bg-[#f0f0f0]">
          <div className="relative overflow-hidden bg-white">
            <Entity />
          </div>
          <div className="flex flex-col">
            <Arrow dir="up" />
            <div className="flex-1" />
            <div className="h-[17px] bg-[#cdcdcd]" />
            <div className="flex-1" />
            <Arrow dir="down" />
          </div>
          <div className="flex">
            <Arrow dir="left" />
            <div className="flex-1" />
            <div className="w-[17px] bg-[#cdcdcd]" />
            <div className="flex-1" />
            <Arrow dir="right" />
          </div>
        </div>
      </div>
    </section>
  )
}

function Toolbox() {
  return (
    <section className="flex min-h-0 w-[180px] shrink-0 flex-col border-b border-l border-[#a0a0a0] bg-[#f0f0f0]">
      <PanelHeader title="Toolbox" />
      <div className="flex min-h-0 flex-1 py-[2px]">
        <div className="h-0 min-h-full flex-1 overflow-hidden pl-[3px]">
          {SECTIONS.map((s) => (
            <div key={s.title}>
              <h3 className="flex h-[22px] items-center gap-1 border-t border-[#d0d0d0] bg-[#efefef] text-[12px] text-[#111]">
                <button aria-label={`Collapse ${s.title}`} className="flex size-[19px] items-center justify-center rounded-full border border-[#444] bg-white">
                  <svg viewBox="0 0 8 6" fill="none" aria-hidden className="h-[6px] w-2"><path d="m1 5 3-3.500L7 5" stroke="#222" strokeWidth="1.800" /></svg>
                </button>
                {s.title}
              </h3>
              <div className="grid grid-cols-[repeat(6,26px)] bg-gradient-to-r from-[#f0f5fa] to-white">
                {Object.entries(s.items).map(([name, icon]) => (
                  <div key={name} className="flex h-[26px] items-center">
                    <button
                      aria-label={name}
                      className={clsx("flex size-6 items-center justify-center border", name === "Pointer" ? "border-[#6f94c4] bg-[#c4daf4]" : "border-transparent")}
                    >
                      <Glyph>{icon}</Glyph>
                    </button>
                  </div>
                ))}
              </div>
            </div>
          ))}
        </div>
        <div className="mr-[3px] flex w-[17px] flex-col items-center">
          <Arrow dir="up" faint />
          <div className="mt-[22px] mb-7 w-full flex-1 bg-[#cdcdcd]" />
          <Arrow dir="down" faint />
        </div>
      </div>
    </section>
  )
}

function OutputTabs() {
  return (
    <div className={clsx("flex h-[17px] shrink-0 border-b border-[#909090] bg-[#f0f0f0] text-[12px] text-black", CLASSIC)}>
      <div className="flex w-[471px] overflow-hidden border-t border-r border-black bg-[#c8c8c8]">
        {["M6 1 2 4l4 3z", "M2 1l4 3-4 3z"].map((d, i) => (
          <button
            key={d}
            aria-label={i ? "Next tab" : "Previous tab"}
            className="flex w-[17px] items-center justify-center border-r border-b border-black bg-[#f0f0f0]"
          >
            <svg viewBox="0 0 8 8" aria-hidden className="size-2"><path d={d} fill="#9c9c9c" /></svg>
          </button>
        ))}
        {["General", "Check Model", "Generation", "Reverse"].map((t, i) => (
          <button key={t} className={clsx("flex items-center leading-4", i === 0 ? "bg-[#cce8cf]" : "bg-[#f0f0f0]")}>
            {i === 0 && <svg viewBox="0 0 10 16" aria-hidden className="h-4 w-[10px]"><path d="M0 0v16h7.500L1 0z" fill="#c8c8c8" /><path d="m1 0 6.500 16" stroke="#555" /></svg>}
            {t}
            <svg viewBox="0 0 15 16" fill="none" aria-hidden className="h-4 w-[15px]">
              {i === 0 && <path d="M11 0 4 16h11V0z" fill="#f0f0f0" />}
              {i === 3 && <path d="M11 0 4 16h11V0z" fill="#c8c8c8" />}
              <path d={i === 3 ? "M11 0 4 16" : i === 0 ? "M11 0 4 16M8 8l4 8" : "M4 0l7 16M8 8.500 4.500 16"} stroke="#555" />
            </svg>
          </button>
        ))}
      </div>
      <div className="ml-[3px] flex flex-1 border-l border-[#a0a0a0]">
        <Arrow dir="left" />
        <div className="flex-1 bg-[#cdcdcd]" />
        <Arrow dir="right" />
        <div className="w-[18px]" />
      </div>
    </div>
  )
}

function Grip() {
  return (
    <svg viewBox="0 0 12 12" aria-hidden className="size-3" fill="#b4b4b4">
      <path d="M9 0h2v2H9zM6 3h2v2H6zM9 3h2v2H9zM3 6h2v2H3zM6 6h2v2H6zM9 6h2v2H9zM0 9h2v2H0zM3 9h2v2H3zM6 9h2v2H6zM9 9h2v2H9z" />
    </svg>
  )
}

export default function App() {
  return (
    <div className={clsx("relative flex h-screen w-full flex-col overflow-hidden border-r-2 border-[#c3a398] bg-[#e4e2dd]", UI)}>
      <svg aria-hidden className="absolute size-0">
        <defs>
          <linearGradient id="shapeFill" x1="0" y1="0" x2="1" y2="1">
            <stop offset="0.200" stopColor="#fff" />
            <stop offset="1" stopColor="#a8c4f8" />
          </linearGradient>
          <linearGradient id="metal">
            <stop offset="0" stopColor="#f4f4f4" />
            <stop offset="1" stopColor="#606468" />
          </linearGradient>
          <linearGradient id="folderFill" x1="0" y1="0" x2="1" y2="1">
            <stop offset="0" stopColor="#fff" />
            <stop offset="1" stopColor="#8c8c8c" />
          </linearGradient>
        </defs>
      </svg>
      <TitleBar />
      <MenuBar />
      <Toolbar />
      <main className="relative flex min-h-0 flex-1 border-t border-[#a6a6a6] bg-gradient-to-r from-[#dddad5] to-[#f0efed] pt-px">
        <ObjectBrowser />
        <div className="w-[2px]" />
        <DiagramArea />
        <div className="w-[3px]" />
        <Toolbox />
        <svg viewBox="0 0 130 90" aria-hidden className="pointer-events-none absolute top-[114px] left-[142px] h-[90px] w-[130px]">
          <path d="M0 88 108 10l-3-6 22-2-12 18-4-4z" fill="#fb3d39" stroke="#fb3d39" strokeLinejoin="round" />
        </svg>
      </main>
      <section className="mt-2 flex h-[198px] shrink-0 flex-col">
        <PanelHeader title="Output" />
        <div className="flex flex-1">
          <div role="log" aria-label="Output" className="mr-px flex-1 bg-[#cce8cf]" />
          <div className="flex w-[17px] flex-col items-center bg-[#f0f0f0]">
            <Arrow dir="up" />
            <div className="w-full flex-1 bg-[#cdcdcd]" />
            <Arrow dir="down" />
          </div>
        </div>
        <OutputTabs />
      </section>
      <footer className="flex h-7 shrink-0 items-center justify-between bg-gradient-to-b from-[#fbfbfc] to-[#d9dcdf] pl-[11px] text-[12px] text-black">
        <span className="pt-1">Entity '学生'</span>
        <span className="self-end"><Grip /></span>
      </footer>
      <p className="pointer-events-none absolute right-[19px] bottom-[19px] text-[18px] leading-6 font-light text-[#6c6c6c]">@稀土掘金技术社区</p>
    </div>
  )
}
